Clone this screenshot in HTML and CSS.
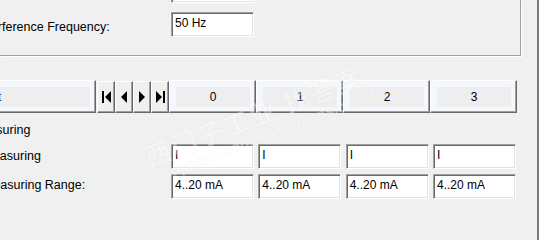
FILE: index.html
```html
<!DOCTYPE html>
<html lang="en">
<head>
<meta charset="utf-8">
<title>Measuring</title>
<link rel="stylesheet" href="styles.css">
</head>
<body>
<div class="page">
  <div class="group">
    <div class="frow frow-top">
      <span class="lab"></span>
      <div class="field"></div>
    </div>
    <div class="frow frow-freq">
      <span class="lab cut-freq">Interference Frequency:</span>
      <div class="field">50 Hz</div>
    </div>
  </div>

  <div class="nav">
    <div class="ncell ncell-first"><div class="ninner ninner-first"><span class="ntext-cut">t</span></div></div>
    <div class="nbtns">
      <div class="nbtn"><svg width="9" height="12" viewBox="0 0 9 12"><rect x="0" y="0" width="2" height="12"/><path d="M9 0 L3 6 L9 12 Z"/></svg></div>
      <div class="nbtn"><svg width="6" height="12" viewBox="0 0 6 12"><path d="M6 0 L0 6 L6 12 Z"/></svg></div>
      <div class="nbtn"><svg width="6" height="12" viewBox="0 0 6 12"><path d="M0 0 L6 6 L0 12 Z"/></svg></div>
      <div class="nbtn"><svg width="9" height="12" viewBox="0 0 9 12"><path d="M0 0 L6 6 L0 12 Z"/><rect x="7" y="0" width="2" height="12"/></svg></div>
    </div>
    <div class="ncell"><div class="ninner">0</div></div>
    <div class="ncell"><div class="ninner">1</div></div>
    <div class="ncell"><div class="ninner">2</div></div>
    <div class="ncell"><div class="ninner">3</div></div>
  </div>

  <div class="sec"><span class="lab cut-sec">Measuring</span></div>

  <div class="prow prow-first">
    <span class="lab cut-type">Type of Measuring</span>
    <div class="fields">
      <div class="field">I</div>
      <div class="field">I</div>
      <div class="field">I</div>
      <div class="field">I</div>
    </div>
  </div>
  <div class="prow">
    <span class="lab cut-range">Measuring Range:</span>
    <div class="fields">
      <div class="field">4..20 mA</div>
      <div class="field">4..20 mA</div>
      <div class="field">4..20 mA</div>
      <div class="field">4..20 mA</div>
    </div>
  </div>

  <div class="wm" aria-hidden="true">
    <div class="wm-cn">西门子工业 找答案</div>
    <div class="wm-en">support.industry.siemens.com/cs</div>
  </div>
</div>
</body>
</html>
```

FILE: styles.css
```css
* { box-sizing: border-box; }

body {
  margin: 0;
  background: #f0f0f0;
  font-family: "Liberation Sans", Arial, sans-serif;
  font-size: 12.5px;
  color: #000;
}

.page {
  position: relative;
  width: 539px;
  height: 240px;
  overflow: hidden;
  border-right: 2px solid #7a7a7a;
}

/* top group box (cut off on left/top) */
.group {
  width: 521px;
  height: 56px;
  border-right: 1px solid #a0a0a0;
  border-bottom: 1px solid #a0a0a0;
  box-shadow: 1px 1px 0 #fff;
  display: flex;
  flex-direction: column;
  gap: 9px;
}

.frow {
  display: flex;
  align-items: flex-start;
}

.frow-top {
  margin-top: -22px;
}

.frow-freq .lab {
  padding-top: 8px;
}

.lab {
  flex: none;
  width: 171px;
  white-space: nowrap;
  line-height: 15px;
}

.cut-freq { margin-left: -23px; width: 194px; }
.cut-sec { margin-left: -28px; width: 199px; }
.cut-type { margin-left: -62px; width: 233px; }
.cut-range { margin-left: -17px; width: 188px; }

.field {
  flex: none;
  width: 83px;
  height: 25px;
  background: #fff;
  border: 1px solid;
  border-color: #a0a0a0 #fff #fff #a0a0a0;
  box-shadow: inset 1px 1px 0 #696969, inset -1px -1px 0 #e3e3e3;
  padding: 4px 0 0 3px;
  font-size: 12px;
  line-height: 13px;
  white-space: nowrap;
}

/* navigation row */
.nav {
  display: flex;
  align-items: flex-end;
  margin-top: 24px;
  height: 33px;
}

.ncell {
  flex: none;
  width: 87px;
  height: 33px;
  border: 1px solid;
  border-color: #fff #696969 #696969 #fff;
  box-shadow: inset -1px -1px 0 #a0a0a0;
  background: #f4f7fb;
  padding: 6px 5px 5px 6px;
}

.ncell-first {
  width: 96px;
  border-left: none;
  padding-left: 0;
  margin-right: 1px;
}

.ninner {
  height: 100%;
  background: #eeeeee;
  display: flex;
  align-items: center;
  justify-content: center;
  font-size: 12px;
}

.ninner-first { justify-content: flex-start; }

.ntext-cut {
  color: #1c3d9a;
  margin-left: -2px;
}

.nbtns {
  display: flex;
}

.nbtn {
  flex: none;
  width: 18px;
  height: 32px;
  border: 1px solid;
  border-color: #fff #696969 #696969 #fff;
  box-shadow: inset -1px -1px 0 #a0a0a0;
  background: #f0f0f0;
  display: flex;
  align-items: center;
  justify-content: center;
}

.nbtn svg { display: block; fill: #000; }

/* measuring section */
.sec {
  margin-top: 10px;
  line-height: 15px;
  white-space: nowrap;
}

.prow {
  display: flex;
  align-items: baseline;
  margin-top: 5px;
}

.prow-first {
  align-items: flex-start;
  margin-top: 6px;
}

.prow-first .lab {
  padding-top: 5px;
}

.fields {
  display: flex;
  align-items: baseline;
  gap: 4.34px;
}

/* faint watermark overlay */
.wm {
  position: absolute;
  left: 140px;
  top: 143px;
  transform: rotate(-21deg);
  transform-origin: 0 0;
  pointer-events: none;
  white-space: nowrap;
  font-weight: bold;
  color: rgba(255, 255, 255, 0.4);
  -webkit-text-stroke: 0.5px rgba(170, 170, 170, 0.12);
}

.wm-cn {
  font-family: "Noto Sans CJK SC", sans-serif;
  font-size: 26px;
  line-height: 30px;
  letter-spacing: 2px;
}

.wm-en {
  font-family: "Liberation Sans", sans-serif;
  font-size: 15px;
  line-height: 16px;
  margin-left: 10px;
}
```
